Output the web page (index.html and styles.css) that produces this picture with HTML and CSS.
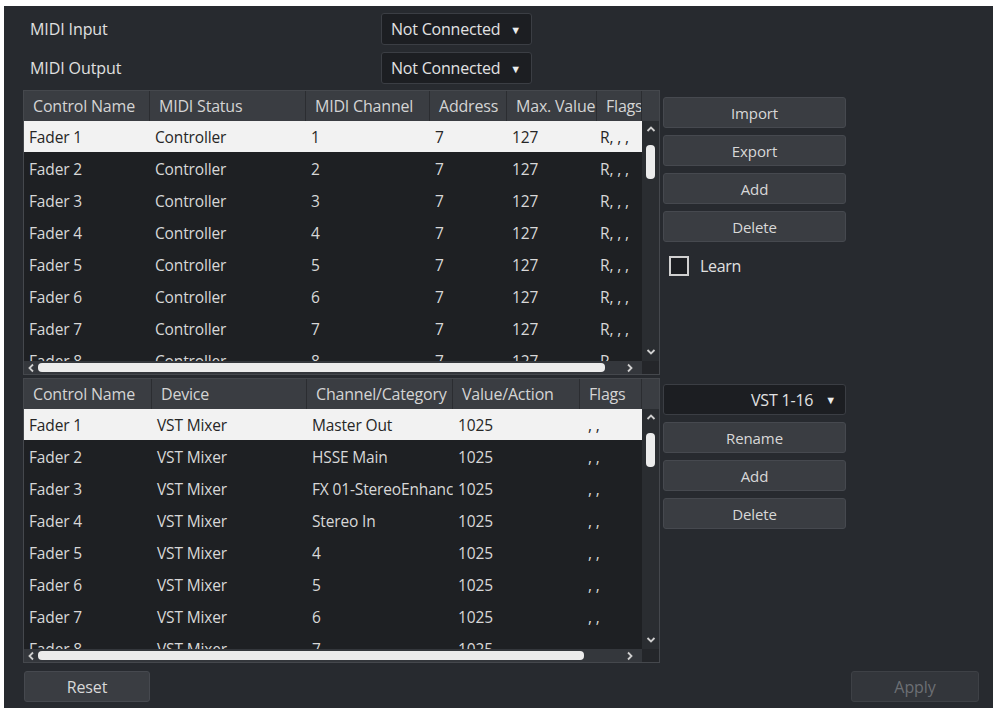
FILE: index.html
```html
<!DOCTYPE html>
<html>
<head>
<meta charset="utf-8">
<link rel="stylesheet" href="styles.css">
</head>
<body>
<div class="panel">
  <div class="toprow">
    <span class="label">MIDI Input</span>
    <div class="dropdown small"><span>Not Connected</span><span class="tri">&#9660;</span></div>
  </div>
  <div class="toprow">
    <span class="label">MIDI Output</span>
    <div class="dropdown small"><span>Not Connected</span><span class="tri">&#9660;</span></div>
  </div>

  <div class="section first">
    <div class="table t1">
      <div class="head">
        <div class="hc">Control Name</div><div class="hc">MIDI Status</div><div class="hc">MIDI Channel</div><div class="hc">Address</div><div class="hc">Max. Value</div><div class="hc">Flags</div><div class="hc blank"></div>
      </div>
      <div class="bodywrap">
        <div class="rows">
          <div class="row sel"><div>Fader 1</div><div>Controller</div><div>1</div><div>7</div><div>127</div><div class="fl">R, , ,</div></div>
          <div class="row"><div>Fader 2</div><div>Controller</div><div>2</div><div>7</div><div>127</div><div class="fl">R, , ,</div></div>
          <div class="row"><div>Fader 3</div><div>Controller</div><div>3</div><div>7</div><div>127</div><div class="fl">R, , ,</div></div>
          <div class="row"><div>Fader 4</div><div>Controller</div><div>4</div><div>7</div><div>127</div><div class="fl">R, , ,</div></div>
          <div class="row"><div>Fader 5</div><div>Controller</div><div>5</div><div>7</div><div>127</div><div class="fl">R, , ,</div></div>
          <div class="row"><div>Fader 6</div><div>Controller</div><div>6</div><div>7</div><div>127</div><div class="fl">R, , ,</div></div>
          <div class="row"><div>Fader 7</div><div>Controller</div><div>7</div><div>7</div><div>127</div><div class="fl">R, , ,</div></div>
          <div class="row"><div>Fader 8</div><div>Controller</div><div>8</div><div>7</div><div>127</div><div class="fl">R, , ,</div></div>
        </div>
        <div class="vscroll">
          <svg class="arr" width="10" height="8" viewBox="0 0 10 8"><path d="M1.5 6 L5 2.5 L8.5 6" fill="none" stroke="#cfcfcf" stroke-width="1.8"/></svg>
          <div class="vthumb"></div>
          <div class="vspace"></div>
          <svg class="arr" width="10" height="8" viewBox="0 0 10 8"><path d="M1.5 2 L5 5.5 L8.5 2" fill="none" stroke="#cfcfcf" stroke-width="1.8"/></svg>
        </div>
      </div>
      <div class="hscroll">
        <div class="htrack">
          <svg class="harr" width="8" height="10" viewBox="0 0 8 10"><path d="M6 1.5 L2.5 5 L6 8.5" fill="none" stroke="#cfcfcf" stroke-width="1.8"/></svg>
          <div class="hthumb w1"></div>
          <div class="hspace"></div>
          <svg class="harr" width="8" height="10" viewBox="0 0 8 10"><path d="M2 1.5 L5.5 5 L2 8.5" fill="none" stroke="#cfcfcf" stroke-width="1.8"/></svg>
        </div>
        <div class="corner"></div>
      </div>
    </div>
    <div class="side">
      <div class="btn">Import</div>
      <div class="btn">Export</div>
      <div class="btn">Add</div>
      <div class="btn">Delete</div>
      <div class="learn"><span class="check"></span><span>Learn</span></div>
    </div>
  </div>

  <div class="section second">
    <div class="table t2">
      <div class="head">
        <div class="hc">Control Name</div><div class="hc">Device</div><div class="hc">Channel/Category</div><div class="hc">Value/Action</div><div class="hc">Flags</div><div class="hc blank"></div>
      </div>
      <div class="bodywrap">
        <div class="rows">
          <div class="row sel"><div>Fader 1</div><div>VST Mixer</div><div>Master Out</div><div>1025</div><div class="fl2">, ,</div></div>
          <div class="row"><div>Fader 2</div><div>VST Mixer</div><div>HSSE Main</div><div>1025</div><div class="fl2">, ,</div></div>
          <div class="row"><div>Fader 3</div><div>VST Mixer</div><div>FX 01-StereoEnhancer</div><div>1025</div><div class="fl2">, ,</div></div>
          <div class="row"><div>Fader 4</div><div>VST Mixer</div><div>Stereo In</div><div>1025</div><div class="fl2">, ,</div></div>
          <div class="row"><div>Fader 5</div><div>VST Mixer</div><div>4</div><div>1025</div><div class="fl2">, ,</div></div>
          <div class="row"><div>Fader 6</div><div>VST Mixer</div><div>5</div><div>1025</div><div class="fl2">, ,</div></div>
          <div class="row"><div>Fader 7</div><div>VST Mixer</div><div>6</div><div>1025</div><div class="fl2">, ,</div></div>
          <div class="row"><div>Fader 8</div><div>VST Mixer</div><div>7</div><div>1025</div><div class="fl2">, ,</div></div>
        </div>
        <div class="vscroll">
          <svg class="arr" width="10" height="8" viewBox="0 0 10 8"><path d="M1.5 6 L5 2.5 L8.5 6" fill="none" stroke="#cfcfcf" stroke-width="1.8"/></svg>
          <div class="vthumb"></div>
          <div class="vspace"></div>
          <svg class="arr" width="10" height="8" viewBox="0 0 10 8"><path d="M1.5 2 L5 5.5 L8.5 2" fill="none" stroke="#cfcfcf" stroke-width="1.8"/></svg>
        </div>
      </div>
      <div class="hscroll">
        <div class="htrack">
          <svg class="harr" width="8" height="10" viewBox="0 0 8 10"><path d="M6 1.5 L2.5 5 L6 8.5" fill="none" stroke="#cfcfcf" stroke-width="1.8"/></svg>
          <div class="hthumb w2"></div>
          <div class="hspace"></div>
          <svg class="harr" width="8" height="10" viewBox="0 0 8 10"><path d="M2 1.5 L5.5 5 L2 8.5" fill="none" stroke="#cfcfcf" stroke-width="1.8"/></svg>
        </div>
        <div class="corner"></div>
      </div>
    </div>
    <div class="side side2">
      <div class="dropdown wide"><span>VST 1-16</span><span class="tri">&#9660;</span></div>
      <div class="btn">Rename</div>
      <div class="btn">Add</div>
      <div class="btn">Delete</div>
    </div>
  </div>

  <div class="bottom">
    <div class="btn reset">Reset</div>
    <div class="btn apply">Apply</div>
  </div>
</div>
</body>
</html>
```

FILE: styles.css
```css
* { box-sizing: border-box; }
html, body { margin: 0; padding: 0; background: #ffffff; }
body {
  font-family: "Open Sans", "Liberation Sans", sans-serif;
  font-size: 15.5px;
  color: #d6d6d6;
  width: 995px;
  height: 712px;
  overflow: hidden;
}
.panel {
  margin: 6px 2px 0 4px;
  width: 989px;
  height: 702px;
  background: #272a2f;
  padding: 7px 14px 6px 19px;
  display: flex;
  flex-direction: column;
}
.toprow {
  display: flex;
  align-items: center;
  height: 32px;
  margin-bottom: 7px;
}
.toprow + .toprow { margin-bottom: 6px; }
.label {
  width: 358px;
  padding-left: 7px;
  color: #e0e0e0;
  font-size: 16px;
  letter-spacing: -0.1px;
}
.dropdown {
  display: flex;
  align-items: center;
  justify-content: flex-end;
  background: #1c1e22;
  border: 1px solid #3b3e44;
  border-radius: 3px;
  color: #e2e2e2;
  font-size: 16px;
  letter-spacing: -0.2px;
}
.dropdown.small { width: 151px; height: 32px; padding-right: 10px; }
.dropdown .tri { font-size: 11px; margin-left: 10px; color: #ececec; }
.dropdown.wide { width: 183px; height: 31px; padding-right: 9px; margin-bottom: 7px; }
.dropdown.wide .tri { margin-left: 12px; }

.section { display: flex; height: 285px; }
.section.second { margin-top: 3px; }
.table {
  width: 637px;
  height: 285px;
  border: 1px solid #45484d;
  display: flex;
  flex-direction: column;
  background: #1e2023;
}
.head {
  display: grid;
  height: 30px;
  background: #3a3d42;
  flex: none;
}
.t1 .head, .t1 .row { grid-template-columns: 126px 156px 124px 77px 90px 45px; }
.t1 .head { grid-template-columns: 126px 156px 124px 77px 90px 45px 17px; }
.t2 .head, .t2 .row { grid-template-columns: 128px 155px 146px 127px 62px; }
.t2 .head { grid-template-columns: 128px 155px 146px 127px 62px 17px; }
.hc {
  line-height: 30px;
  padding-left: 9px;
  white-space: nowrap;
  overflow: hidden;
  color: #d4d4d4;
  font-size: 16px;
  border-right: 1px solid #2b2d31;
  letter-spacing: -0.2px;
}
.hc.blank { border-right: none; }
.bodywrap {
  display: flex;
  height: 240px;
  flex: none;
}
.rows {
  width: 618px;
  height: 240px;
  overflow: hidden;
}
.row {
  display: grid;
  height: 32px;
  align-items: center;
}
.row > div {
  padding-left: 5px;
  white-space: nowrap;
  overflow: hidden;
  letter-spacing: -0.15px;
  color: #d8d8d8;
}
.row.sel { background: #f2f2f2; height: 31px; margin-bottom: 1px; }
.row.sel > div { color: #262626; }
.row > .fl { padding-left: 3px; }
.row > .fl2 { padding-left: 8px; }
.vscroll {
  width: 17px;
  height: 240px;
  background: #2a2d31;
  display: flex;
  flex-direction: column;
  align-items: center;
  padding: 4px 0 5px;
}
.arr { flex: none; }
.vthumb {
  width: 9px;
  height: 34px;
  background: #ececec;
  border-radius: 4px;
  margin-top: 12px;
}
.vspace { flex: 1; }
.hscroll {
  display: flex;
  height: 13px;
  flex: none;
}
.htrack {
  width: 618px;
  display: flex;
  align-items: center;
  background: #34373c;
  padding: 0 8px 0 3px;
}
.harr { flex: none; }
.hthumb {
  height: 9px;
  background: #ececec;
  border-radius: 4px;
  margin-left: 3px;
}
.hthumb.w1 { width: 567px; }
.hthumb.w2 { width: 546px; }
.hspace { flex: 1; }
.corner { width: 17px; background: #24262a; }

.side {
  margin-left: 3px;
  padding-top: 7px;
  width: 183px;
  display: flex;
  flex-direction: column;
}
.side2 { padding-top: 6px; }
.btn {
  height: 31px;
  background: #3a3d42;
  border: 1px solid #46494f;
  border-radius: 3px;
  display: flex;
  align-items: center;
  justify-content: center;
  color: #d8d8d8;
  margin-bottom: 7px;
  font-size: 15px;
  letter-spacing: -0.1px;
}
.learn {
  display: flex;
  align-items: center;
  margin-top: 6px;
  padding-left: 6px;
  color: #e0e0e0;
  font-size: 16px;
  letter-spacing: -0.3px;
}
.check {
  width: 20px;
  height: 20px;
  border: 2px solid #d0d0d0;
  background: #1c1e22;
  margin-right: 11px;
}
.bottom {
  display: flex;
  justify-content: space-between;
  margin-top: 8px;
  padding-left: 1px;
}
.bottom .btn { margin-bottom: 0; font-size: 16px; }
.reset { width: 126px; }
.apply { width: 128px; background: #33363b; color: #6c6f74; border-color: #3e4146; }
```
